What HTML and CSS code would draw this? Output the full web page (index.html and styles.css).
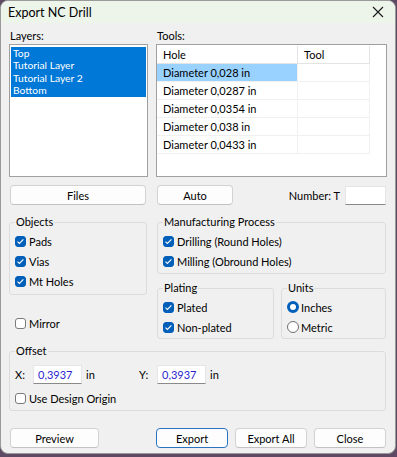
FILE: index.html
```html
<!DOCTYPE html>
<html>
<head>
    <title>Export NC Drill</title>
    <link rel="stylesheet" href="styles.css">
</head>
<body>
    <div class="window">
        <div class="titlebar">
            <span class="title">Export NC Drill</span>
            <svg class="close" width="12" height="12" viewBox="0 0 12 12">
                <path d="M1 1 L11 11 M11 1 L1 11" stroke="#1a1a1a" stroke-width="1.1" fill="none"/>
            </svg>
        </div>

        <div class="content">
            <div class="lists">
                <div class="col">
                    <div class="label">Layers:</div>
                    <div class="listbox">
                        <div class="item selected">Top</div>
                        <div class="item selected">Tutorial Layer</div>
                        <div class="item selected">Tutorial Layer 2</div>
                        <div class="item selected">Bottom</div>
                    </div>
                </div>
                <div class="col">
                    <div class="label">Tools:</div>
                    <div class="tablebox">
                        <table class="tools">
                            <tr class="head"><td class="hole">Hole</td><td class="tool">Tool</td></tr>
                            <tr><td class="hole current">Diameter 0,028 in</td><td class="tool"></td></tr>
                            <tr><td class="hole">Diameter 0,0287 in</td><td class="tool"></td></tr>
                            <tr><td class="hole">Diameter 0,0354 in</td><td class="tool"></td></tr>
                            <tr><td class="hole">Diameter 0,038 in</td><td class="tool"></td></tr>
                            <tr><td class="hole">Diameter 0,0433 in</td><td class="tool"></td></tr>
                        </table>
                    </div>
                </div>
            </div>

            <div class="btnrow">
                <button class="btn files">Files</button>
                <button class="btn auto">Auto</button>
                <span class="number">Number: T</span>
                <span class="field numfield"></span>
            </div>

            <div class="groups">
                <div class="leftcol">
                    <fieldset class="group objects">
                        <legend>Objects</legend>
                        <div class="check"><span class="box on"></span>Pads</div>
                        <div class="check"><span class="box on"></span>Vias</div>
                        <div class="check"><span class="box on"></span>Mt Holes</div>
                    </fieldset>
                    <div class="check mirror"><span class="box"></span>Mirror</div>
                </div>
                <div class="rightcol">
                    <fieldset class="group manuf">
                        <legend>Manufacturing Process</legend>
                        <div class="check"><span class="box on"></span>Drilling (Round Holes)</div>
                        <div class="check"><span class="box on"></span>Milling (Obround Holes)</div>
                    </fieldset>
                    <div class="pair">
                        <fieldset class="group plating">
                            <legend>Plating</legend>
                            <div class="check"><span class="box on"></span>Plated</div>
                            <div class="check"><span class="box on"></span>Non-plated</div>
                        </fieldset>
                        <fieldset class="group units">
                            <legend>Units</legend>
                            <div class="check"><span class="radio on"></span>Inches</div>
                            <div class="check"><span class="radio"></span>Metric</div>
                        </fieldset>
                    </div>
                </div>
            </div>

            <fieldset class="group offset">
                <legend>Offset</legend>
                <div class="xyrow">
                    <span class="axis">X:</span>
                    <span class="field value">0,3937</span>
                    <span class="unit">in</span>
                    <span class="axis yaxis">Y:</span>
                    <span class="field value">0,3937</span>
                    <span class="unit">in</span>
                </div>
                <div class="check origin"><span class="box"></span>Use Design Origin</div>
            </fieldset>

            <div class="actions">
                <button class="btn preview">Preview</button>
                <button class="btn export default">Export</button>
                <button class="btn exportall">Export All</button>
                <button class="btn close-btn">Close</button>
            </div>
        </div>
    </div>
</body>
</html>
```

FILE: styles.css
```css
body {
    margin: 0;
    background: #5e4b63;
    font-family: Lato, "Noto Sans", sans-serif;
    font-size: 11px;
    color: #000;
}

.window {
    width: 394px;
    height: 452px;
    background: #f0f0f0;
    border: 1px solid #9a9a9a;
    border-radius: 8px;
    overflow: hidden;
}

.titlebar {
    height: 22px;
    background: #edf5ea;
    display: flex;
    align-items: center;
    justify-content: space-between;
    padding: 0 11px 0 7px;
}

.title {
    font-size: 12.5px;
}

.content {
    padding: 0 8px 0 8px;
}

.lists {
    display: grid;
    grid-template-columns: 139px 231px;
    column-gap: 8px;
}

.label {
    height: 14px;
    line-height: 14px;
    margin-top: 6px;
    margin-bottom: 1px;
    padding-left: 1px;
}

.listbox {
    height: 127px;
    background: #fff;
    border: 1px solid #a0a0a0;
    padding: 2px 1px;
    box-sizing: content-box;
}

.item {
    height: 12.4px;
    line-height: 12.4px;
    padding-left: 2px;
    font-size: 10.3px;
}

.item.selected {
    background: #0078d7;
    color: #fff;
}

.tablebox {
    height: 130px;
    background: #fff;
    border: 1px solid #a0a0a0;
    padding: 1px 0 0 0;
    box-sizing: content-box;
}

.tools {
    border-collapse: collapse;
}

.tools td {
    height: 17px;
    padding: 0 0 0 6px;
    border-right: 1px solid #f0f0f0;
    border-bottom: 1px solid #f0f0f0;
    white-space: nowrap;
}

.tools .hole {
    width: 134px;
}

.tools .tool {
    width: 65px;
}

.tools .head td {
    border-right: 1px solid #e4e4e4;
    border-bottom: 1px solid #e4e4e4;
}

.tools .current {
    background: #99d1ff;
}

.btn {
    font-family: inherit;
    font-size: 11px;
    height: 20px;
    background: #fdfdfd;
    border: 1px solid #d2d2d2;
    border-bottom-color: #c2c2c2;
    border-radius: 4px;
    padding: 0;
    color: #000;
}

.btnrow {
    display: flex;
    align-items: center;
    margin-top: 8px;
    height: 20px;
}

.files {
    width: 136px;
    margin-left: 1px;
}

.auto {
    width: 76px;
    margin-left: 11px;
}

.number {
    margin-left: auto;
    margin-right: 5px;
}

.field {
    display: inline-block;
    background: #fff;
    border: 1px solid #e5e5e5;
    border-bottom: 1px solid #8a8a8a;
    box-sizing: border-box;
}

.numfield {
    width: 41px;
    height: 19px;
    margin-right: 1px;
}

.groups {
    display: grid;
    grid-template-columns: 138px 229px;
    column-gap: 10px;
    margin-top: 10px;
}

.group {
    border: 1px solid #dcdcdc;
    border-radius: 3px;
    margin: 0;
    padding: 0 5px;
}

.group legend {
    padding: 0 1px;
    height: 14px;
    line-height: 14px;
    font-size: 11px;
}

.check {
    display: flex;
    align-items: center;
    height: 20px;
}

.objects {
    padding-top: 2px;
    padding-bottom: 3px;
}

.mirror {
    margin-top: 18px;
    padding-left: 6px;
}

.manuf {
    padding-top: 2px;
    padding-bottom: 2px;
}

.pair {
    display: grid;
    grid-template-columns: 117px 105px;
    column-gap: 7px;
    margin-top: 7px;
}

.plating, .units {
    padding-top: 2px;
    padding-bottom: 1px;
}

.box {
    width: 11px;
    height: 11px;
    box-sizing: border-box;
    border: 1px solid #7a7a7a;
    border-radius: 3px;
    background: #fff;
    margin-right: 3px;
    flex: none;
}

.box.on {
    border-color: #005fb8;
    background: #005fb8 url("data:image/svg+xml,%3Csvg xmlns='http://www.w3.org/2000/svg' viewBox='0 0 11 11'%3E%3Cpath d='M2.5 5.6 L4.4 7.4 L8.4 3.4' stroke='white' stroke-width='1.1' fill='none'/%3E%3C/svg%3E") center/11px 11px no-repeat;
}

.radio {
    width: 12px;
    height: 12px;
    box-sizing: border-box;
    border: 1px solid #6f6f6f;
    border-radius: 50%;
    background: #fff;
    margin-right: 2px;
    flex: none;
}

.radio.on {
    border: 3.5px solid #005fb8;
}

.offset {
    width: 377px;
    box-sizing: border-box;
    margin-top: 5px;
    padding-top: 6px;
    padding-bottom: 2px;
}

.xyrow {
    display: flex;
    align-items: center;
    height: 20px;
}

.axis {
    width: 18px;
}

.value {
    width: 49px;
    height: 19px;
    line-height: 17px;
    padding-left: 4px;
    color: #2d1fd1;
}

.unit {
    margin-left: 4px;
    width: 53px;
}

.origin {
    margin-top: 4px;
}

.actions {
    display: flex;
    margin-top: 17px;
}

.preview {
    width: 89px;
    margin-left: 1px;
}

.export {
    width: 72px;
    margin-left: auto;
}

.export.default {
    border-color: #2a73c0;
}

.exportall {
    width: 72px;
    margin-left: 7px;
}

.close-btn {
    width: 72px;
    margin-left: 7px;
    margin-right: 1px;
}
```
